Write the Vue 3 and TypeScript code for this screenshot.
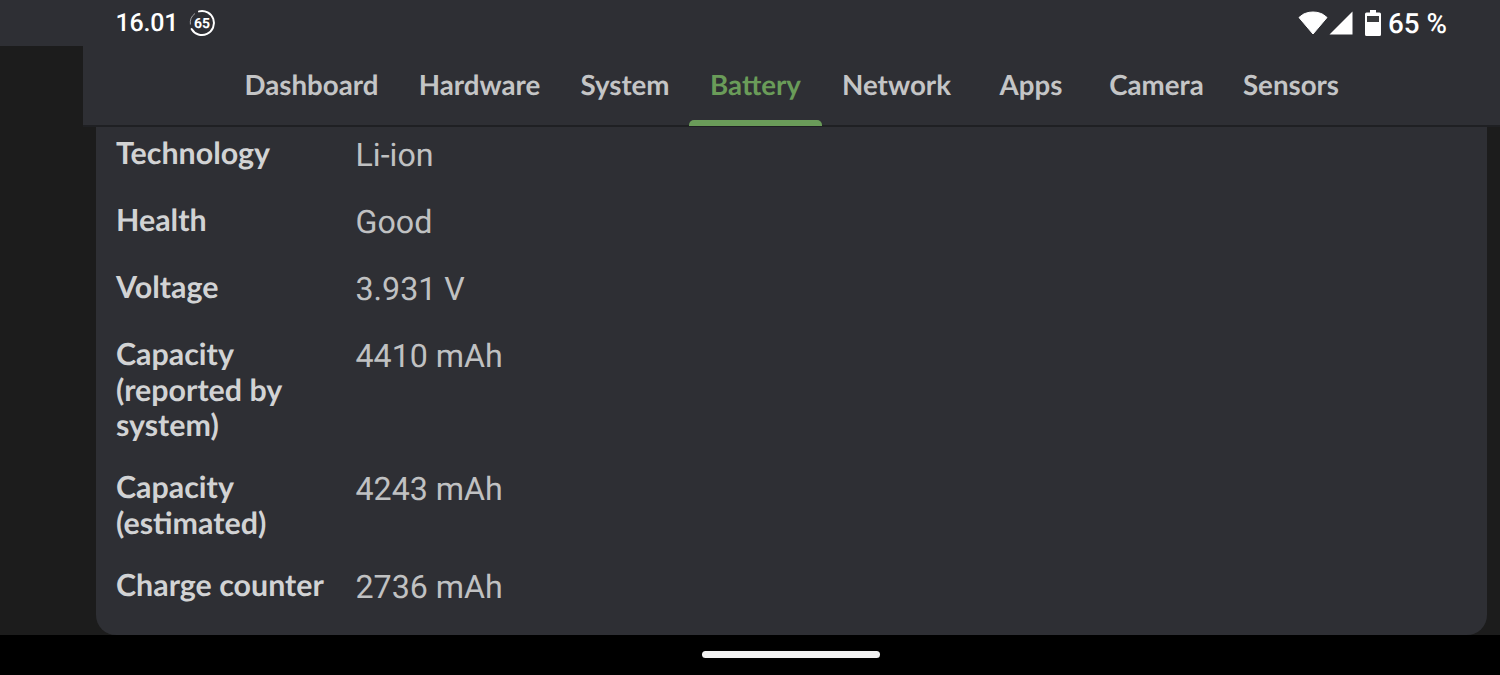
<script setup lang="ts">
const tabs = [
  { label: 'Dashboard', width: 173, shift: 0 },
  { label: 'Hardware', width: 163, shift: 0 },
  { label: 'System', width: 128, shift: 0 },
  { label: 'Battery', width: 133, shift: 0, active: true },
  { label: 'Network', width: 149, shift: 0 },
  { label: 'Apps', width: 112, shift: 8 },
  { label: 'Camera', width: 143, shift: 4 },
  { label: 'Sensors', width: 130, shift: 0 },
]
const rows = [
  { label: 'Technology', value: 'Li-ion' },
  { label: 'Health', value: 'Good' },
  { label: 'Voltage', value: '3.931 V' },
  { label: 'Capacity (reported by system)', value: '4410 mAh' },
  { label: 'Capacity (estimated)', value: '4243 mAh' },
  { label: 'Charge counter', value: '2736 mAh' },
]
</script>

<template>
  <div class="screen">
    <header class="status">
      <div class="status-left">
        <span class="time">16.01</span>
        <svg class="badge" width="28" height="28" viewBox="0 0 28 28">
          <path d="M11 2.400A12 12 0 1 1 3.600 20" fill="none" stroke="#fff" stroke-width="2" stroke-linecap="round" />
          <path d="M2.400 15.500A11.800 11.800 0 0 1 7 4.500" fill="none" stroke="#fff" stroke-width="1" opacity="0.55" />
          <text x="14" y="19" text-anchor="middle" class="badge-text">65</text>
        </svg>
      </div>
      <div class="status-right">
        <svg width="30" height="24" viewBox="0 0 30 24" class="wifi">
          <path d="M1 6.500C5 2.800 9.500 1 15 1S25 2.800 29 6.500L15 23Z" fill="#fff" stroke="#fff" stroke-linejoin="round" />
        </svg>
        <svg width="24" height="24" viewBox="0 0 24 24" class="signal">
          <path d="M23.500 0.500V23.500H0.500Z" fill="#fff" />
        </svg>
        <svg width="16" height="26" viewBox="0 0 16 26" class="batt">
          <path d="M5 0h6v2.500h3.500a1.500 1.500 0 0 1 1.500 1.500v20.500a1.500 1.500 0 0 1-1.500 1.500h-13A1.500 1.500 0 0 1 0 24.500V4a1.500 1.500 0 0 1 1.500-1.500H5Z" fill="#fff" />
          <rect x="2" y="6" width="12" height="6" fill="#3a3b3d" />
        </svg>
        <span class="pct">65 %</span>
      </div>
    </header>

    <div class="body">
      <nav class="tabs">
        <div
          v-for="t in tabs"
          :key="t.label"
          class="tab"
          :class="{ active: t.active }"
          :style="{ width: t.width + 'px', paddingLeft: t.shift + 'px' }"
        >
          {{ t.label }}
        </div>
      </nav>
      <section class="card">
        <div v-for="r in rows" :key="r.label" class="row">
          <div class="label">{{ r.label }}</div>
          <div class="value">{{ r.value }}</div>
        </div>
      </section>
    </div>

    <footer class="nav">
      <div class="pill"></div>
    </footer>
  </div>
</template>

<style>
html, body { margin: 0; background: #000; }
</style>

<style scoped>
.screen {
  width: 1500px;
  height: 675px;
  display: flex;
  flex-direction: column;
  overflow: hidden;
  background: #1c1c1c;
  text-rendering: geometricPrecision;
}
.status {
  height: 46px;
  flex: none;
  background: #2e2f34;
  display: flex;
  justify-content: space-between;
  align-items: center;
  padding: 0 53px 0 115.500px;
  color: #fff;
}
.status-left, .status-right { display: flex; align-items: center; }
.time { font: 500 25px/46px Roboto, sans-serif; letter-spacing: -0.2px; padding-top: 1px; }
.badge { margin-left: 10px; }
.badge-text { font: 700 14px Roboto, sans-serif; fill: #fff; }
.signal { margin-left: 1px; }
.batt { margin-left: 12px; }
.pct { font: 500 27.800px/46px Roboto, sans-serif; margin-left: 7.500px; padding-top: 2px; }
.body {
  flex: 1;
  display: flex;
  flex-direction: column;
  padding-left: 83px;
  min-height: 0;
}
.tabs {
  height: 81px;
  flex: none;
  background: #2e2f34;
  border-bottom: 2px solid #1f2023;
  box-sizing: border-box;
  display: flex;
  padding-left: 142px;
}
.tab {
  display: flex;
  align-items: center;
  justify-content: center;
  height: 79px;
  position: relative;
  padding-bottom: 3px;
  box-sizing: border-box;
  font: 700 27.700px Lato, sans-serif;
  color: #c4c5c6;
  white-space: nowrap;
}
.tab.active { color: #6a9c59; }
.tab.active::after {
  content: '';
  position: absolute;
  left: 0;
  right: 0;
  bottom: -1px;
  height: 6px;
  border-radius: 5px 5px 0 0;
  background: #6a9c59;
}
.card {
  flex: 1;
  margin: 0 13px;
  background: #2e2f34;
  border-radius: 0 0 20px 20px;
  padding: 9px 20px 0;
}
.row {
  display: flex;
  min-height: 40.500px;
  padding-bottom: 26.500px;
}
.label {
  width: 240px;
  flex: none;
  padding-right: 20px;
  box-sizing: border-box;
  font: 700 30.400px/35.500px Lato, sans-serif;
  color: #d2d3d4;
}
.value {
  margin-left: -0.500px;
  padding-top: 1px;
  font: 400 32.200px/37px Roboto, sans-serif;
  color: #c0c1c2;
}
.nav {
  height: 40px;
  flex: none;
  background: #000;
  position: relative;
}
.pill {
  position: absolute;
  left: 702px;
  top: 16px;
  width: 178px;
  height: 7px;
  border-radius: 4px;
  background: #f2f2f2;
}
</style>
